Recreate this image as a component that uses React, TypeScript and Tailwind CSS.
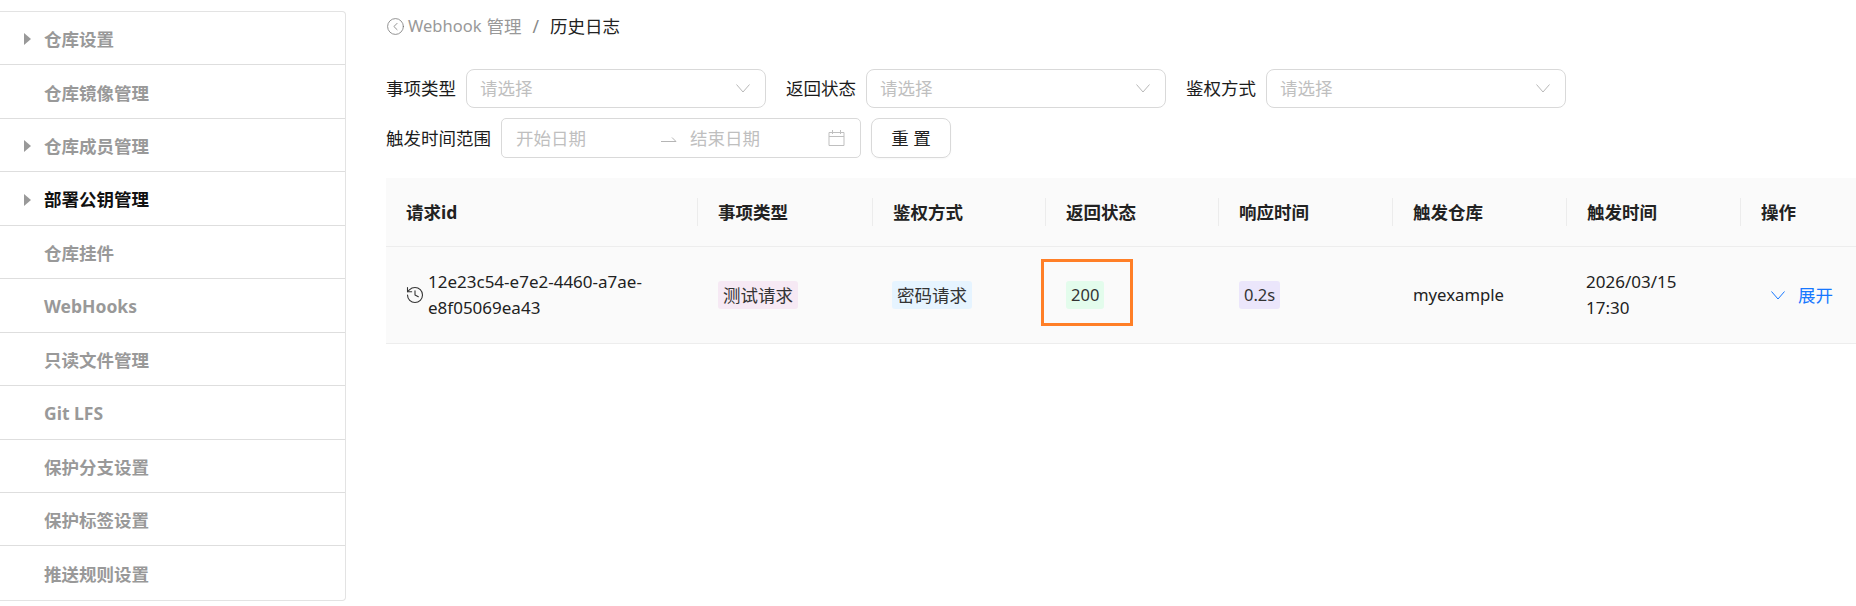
import React from "react";
import { CircleChevronLeft, History } from "lucide-react";

const font = { fontFamily: '"Noto Sans", "Noto Sans CJK SC", sans-serif' };

const menuItems = [
  { label: "仓库设置", arrow: true },
  { label: "仓库镜像管理" },
  { label: "仓库成员管理", arrow: true },
  { label: "部署公钥管理", arrow: true, active: true },
  { label: "仓库挂件" },
  { label: "WebHooks" },
  { label: "只读文件管理" },
  { label: "Git LFS" },
  { label: "保护分支设置" },
  { label: "保护标签设置" },
  { label: "推送规则设置" },
];

const Sidebar = () => (
  <div className="w-[346px] shrink-0 pt-[11px]">
    <div className="rounded-r-[4px] border border-l-0 border-[#e3e3e3] bg-white">
      {menuItems.map((item, idx) => (
        <div
          key={item.label}
          className={`flex h-[53.45px] items-center pl-[24px] pt-[2px] text-[17.5px] font-bold ${
            idx < menuItems.length - 1 ? "border-b border-[#dedede]" : ""
          } ${item.active ? "text-[#111]" : "text-[#999]"}`}
        >
          <span className="flex w-[20px] shrink-0">
            {item.arrow && (
              <span className="h-0 w-0 border-y-[6px] border-l-[7px] border-y-transparent border-l-[#999]" />
            )}
          </span>
          {item.label}
        </div>
      ))}
    </div>
  </div>
);

const Chevron = ({ className }: { className?: string }) => (
  <svg width="14" height="9" viewBox="0 0 14 9" fill="none" stroke="currentColor" className={className}>
    <path d="M0.5 0.5L7 8L13.5 0.5" />
  </svg>
);

const SelectField = ({ label }: { label: string }) => (
  <div className="flex items-center gap-[10px]">
    <span className="w-[70px] text-[17.5px] text-[#1c1c1c]">{label}</span>
    <div className="flex h-[39px] w-[300px] items-center justify-between rounded-[8px] border border-[#d9d9d9] pl-[13px] pr-[15px] text-[17.5px] text-[#bfbfbf]">
      请选择
      <Chevron className="text-[#b8b8b8]" />
    </div>
  </div>
);

const Tag = ({ text, bg, className = "text-[17.5px]" }: { text: string; bg: string; className?: string }) => (
  <span className={`inline-flex h-[28px] items-center rounded-[3px] px-[5px] text-[#333] ${bg} ${className}`}>
    {text}
  </span>
);

const headers = ["请求id", "事项类型", "鉴权方式", "返回状态", "响应时间", "触发仓库", "触发时间", "操作"];

export default function App() {
  return (
    <div className="flex h-[606px] w-[1856px] overflow-hidden bg-white" style={font}>
      <Sidebar />
      <div className="min-w-0 flex-1 pl-[40px]">
        <div className="flex h-[52px] items-center text-[17.5px]">
          <CircleChevronLeft size={19} strokeWidth={1} className="mr-[3px] text-[#777]" />
          <span className="text-[16.5px] text-[#999]">Webhook</span>
          <span className="ml-[5px] text-[#999]">管理</span>
          <span className="mx-[11px] text-[#888]">/</span>
          <span className="text-[#222]">历史日志</span>
        </div>

        <div className="mt-[17px] flex gap-[20px]">
          <SelectField label="事项类型" />
          <SelectField label="返回状态" />
          <SelectField label="鉴权方式" />
        </div>

        <div className="mt-[10px] flex items-center gap-[10px]">
          <span className="w-[105px] text-[17.5px] text-[#1c1c1c]">触发时间范围</span>
          <div className="flex h-[40px] w-[360px] items-center rounded-[5px] border border-[#d9d9d9] pl-[14px] pr-[15px] text-[17.5px] text-[#bfbfbf]">
            <span className="w-[145px]">开始日期</span>
            <svg width="16" height="8" viewBox="0 0 16 8" fill="none" stroke="#b5b5b5" className="mt-[4px] shrink-0">
              <path d="M0 5.5h15L11 1.5" />
            </svg>
            <span className="ml-[13px] flex-1">结束日期</span>
            <svg width="17" height="16" viewBox="0 0 17 16" fill="none" stroke="#bfbfbf">
              <path d="M1 2.5h15v13H1zM1 6.5h15M4.5 0v4M12.5 0v4" />
            </svg>
          </div>
          <div className="flex h-[40px] w-[80px] items-center justify-center rounded-[8px] border border-[#d9d9d9] text-[17.5px] text-[#222] shadow-[0_1px_2px_rgba(0,0,0,0.03)]">
            重 置
          </div>
        </div>

        <div className="mt-[20px] bg-[#fafafa] text-[17.5px] text-[#222]">
          <div className="grid h-[69px] grid-cols-[311px_175px_173px_173px_174px_174px_174px_116px] items-center border-b border-[#ededed] font-bold">
            {headers.map((h, idx) => (
              <div
                key={h}
                className={`h-[28px] pl-[20px] leading-[28px] ${idx > 0 ? "border-l border-[#ececec]" : ""}`}
              >
                {h}
              </div>
            ))}
          </div>
          <div className="grid h-[97px] grid-cols-[311px_175px_173px_173px_174px_174px_174px_116px] items-center border-b border-[#ededed]">
            <div className="flex items-center pl-[19px] pr-[30px]">
              <History size={20} strokeWidth={1.3} className="mr-[3px] shrink-0 text-[#333]" />
              <span className="text-[17px] leading-[26.5px]">12e23c54-e7e2-4460-a7ae-e8f05069ea43</span>
            </div>
            <div className="pl-[21px]"><Tag text="测试请求" bg="bg-[#f6e9f4]" /></div>
            <div className="pl-[20px]"><Tag text="密码请求" bg="bg-[#e6f4ff]" /></div>
            <div className="relative pl-[21px]">
              <Tag text="200" bg="bg-[#e3fcec]" className="text-[16.5px]" />
              <div className="absolute left-[-4px] top-[-22px] h-[67px] w-[92px] border-[3px] border-[#ff7f27]" />
            </div>
            <div className="pl-[21px]"><Tag text="0.2s" bg="bg-[#ebe6fb]" className="text-[16.5px]" /></div>
            <div className="pl-[21px] text-[16.7px]">myexample</div>
            <div className="pl-[20px] text-[17px] leading-[26.5px]">2026/03/15<br />17:30</div>
            <div className="flex items-center pl-[30px] text-[#1677ff]">
              <Chevron className="mr-[12px] h-[9px] w-[16px]" />
              展开
            </div>
          </div>
        </div>
      </div>
    </div>
  );
}
